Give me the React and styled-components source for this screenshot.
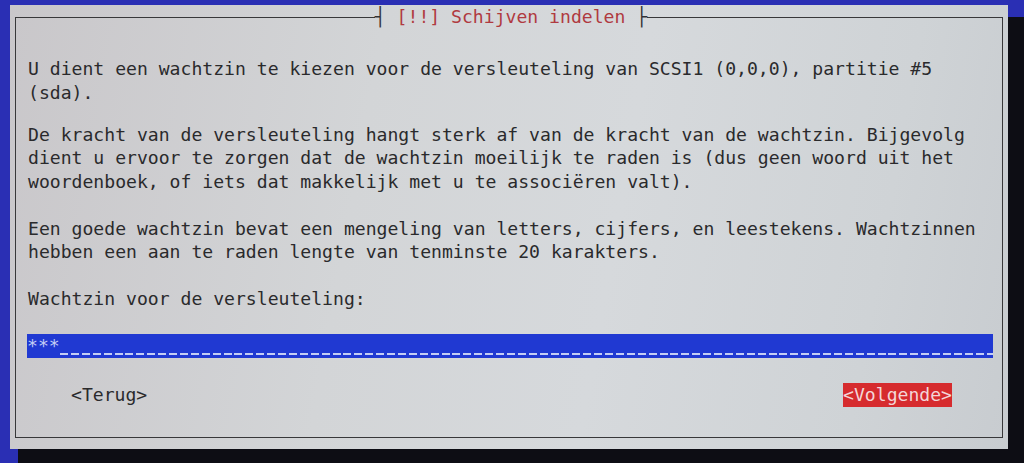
import React from "react";
import styled, { createGlobalStyle } from "styled-components";

const GlobalStyle = createGlobalStyle`
  html, body {
    margin: 0;
    padding: 0;
    background: #2a2fb4;
    overflow: hidden;
  }
  #root {
    width: 1024px;
    height: 463px;
  }
`;

function App() {
  return (
    <>
      <GlobalStyle />
      <Screen>
        <Window>
          <Frame>
            <Legend>
              <Bar>┤ </Bar>
              <Title>[!!] Schijven indelen</Title>
              <Bar> ├</Bar>
            </Legend>
            <Para tight>
              {"U dient een wachtzin te kiezen voor de versleuteling van SCSI1 (0,0,0), partitie #5\n(sda)."}
            </Para>
            <Para>
              {"De kracht van de versleuteling hangt sterk af van de kracht van de wachtzin. Bijgevolg\ndient u ervoor te zorgen dat de wachtzin moeilijk te raden is (dus geen woord uit het\nwoordenboek, of iets dat makkelijk met u te associëren valt)."}
            </Para>
            <Para>
              {"Een goede wachtzin bevat een mengeling van letters, cijfers, en leestekens. Wachtzinnen\nhebben een aan te raden lengte van tenminste 20 karakters."}
            </Para>
            <Para>Wachtzin voor de versleuteling:</Para>
            <Entry>
              <Stars>***</Stars>
              <Dashes />
            </Entry>
            <Buttons>
              <Button>&lt;Terug&gt;</Button>
              <Button active>&lt;Volgende&gt;</Button>
            </Buttons>
          </Frame>
        </Window>
      </Screen>
    </>
  );
}

export default App;

const Screen = styled.div`
  width: 1024px;
  height: 463px;
  padding: 5px 0 0 10px;
  box-sizing: border-box;
  font-family: "DejaVu Sans Mono", "Liberation Mono", monospace;
  font-size: 18.1px;
  line-height: 23.5px;
  color: #2a2a2c;
`;

const Window = styled.div`
  width: 998px;
  height: 444px;
  padding: 0 5px 11px 5px;
  box-sizing: border-box;
  background: linear-gradient(
    100deg,
    #c9c7ca 0%,
    #d3d5d7 35%,
    #d6d9dc 60%,
    #cfd3d6 85%,
    #c8ccd0 100%
  );
  box-shadow: 12px 16px 0 4px #0d0d14;
`;

const Frame = styled.fieldset`
  margin: 0;
  height: 100%;
  min-width: 0;
  box-sizing: border-box;
  border: 1px solid #38383a;
  padding: 28px 8px 0 12px;
`;

const Legend = styled.legend`
  margin: 0 auto;
  padding: 0;
  line-height: 24px;
  white-space: pre;
`;

const Bar = styled.span`
  color: #333336;
`;

const Title = styled.span`
  color: #b03a40;
`;

const Para = styled.div`
  white-space: pre;
  margin-bottom: ${(p) => (p.tight ? "18.5px" : "23.5px")};
`;

const Entry = styled.div`
  display: flex;
  width: 966px;
  height: 23.5px;
  margin-left: -1px;
  background: #2039d2;
  color: #c3cdf5;
`;

const Stars = styled.span`
  white-space: pre;
`;

const Dashes = styled.span`
  flex: 1;
  background-image: repeating-linear-gradient(
    90deg,
    #c3cdf5 0,
    #c3cdf5 8px,
    transparent 8px,
    transparent 10.9px
  );
  background-size: 100% 2px;
  background-repeat: no-repeat;
  background-position: 0 19px;
`;

const Buttons = styled.div`
  display: flex;
  justify-content: space-between;
  margin-top: 25px;
  padding: 0 42px 0 43px;
`;

const Button = styled.span`
  white-space: pre;
  height: 24px;
  background: ${(p) => (p.active ? "#d62b2e" : "transparent")};
  color: ${(p) => (p.active ? "#f3d6d8" : "#2a2a2c")};
`;
